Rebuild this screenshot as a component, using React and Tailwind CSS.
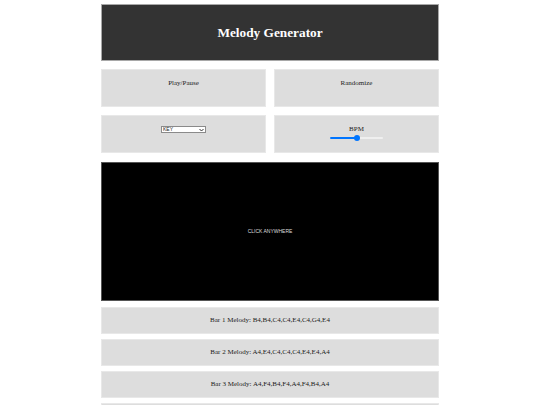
import React, { useState } from 'react';

const bars = [
    'B4,B4,C4,C4,E4,C4,G4,E4',
    'A4,E4,C4,C4,C4,E4,E4,A4',
    'A4,F4,B4,F4,A4,F4,B4,A4',
    'C4,E4,G4,E4,C4,G4,E4,C4',
];

const App = () => {
    const [bpm] = useState(50);

    return (
        <div className="min-h-screen bg-white font-['Liberation_Serif',serif] text-[#222222]">
            <div className="w-[338px] mx-auto pt-[4px]">
                <div className="h-[57px] bg-[#333333] border border-[#a8a8a8] flex items-center justify-center">
                    <h1 className="text-white font-bold text-[13.3px] leading-none">Melody Generator</h1>
                </div>

                <div className="grid grid-cols-2 gap-[8px] mt-[8px]">
                    <button className="h-[38px] bg-[#dddddd] border border-[#e8e8e8] text-[7px] leading-[8px] pt-[9px] flex justify-center items-start">
                        Play/Pause
                    </button>
                    <button className="h-[38px] bg-[#dddddd] border border-[#e8e8e8] text-[7px] leading-[8px] pt-[9px] flex justify-center items-start">
                        Randomize
                    </button>
                </div>

                <div className="grid grid-cols-2 gap-[8px] mt-[8px]">
                    <div className="h-[38px] bg-[#dddddd] border border-[#e8e8e8] flex justify-center pt-[10px]">
                        <div className="w-[45px] h-[7px] bg-white border border-[#8a8a8a] flex items-center justify-between px-[1px] font-['Liberation_Sans',sans-serif] text-[5px] leading-none">
                            <span>KEY</span>
                            <svg width="5" height="4" viewBox="0 0 10 8">
                                <path d="M1 2 L5 6 L9 2" fill="none" stroke="#333" strokeWidth="2" />
                            </svg>
                        </div>
                    </div>
                    <div className="h-[38px] bg-[#dddddd] border border-[#e8e8e8] flex flex-col items-center pt-[10px]">
                        <span className="text-[7px] leading-[7px]">BPM</span>
                        <div className="relative w-[53px] h-[6px] mt-[2px] flex items-center">
                            <div className="w-full h-[2px] rounded-full bg-[#efefef]" />
                            <div className="absolute left-0 h-[2px] rounded-full bg-[#0075ff]" style={{ width: `${bpm}%` }} />
                            <div className="absolute w-[6px] h-[6px] rounded-full bg-[#0075ff]" style={{ left: `calc(${bpm}% - 3px)` }} />
                        </div>
                    </div>
                </div>

                <div className="h-[139px] mt-[9px] bg-black border border-[#555555] flex items-center justify-center">
                    <span className="text-[#dddddd] text-[5px] font-['Liberation_Sans',sans-serif]">CLICK ANYWHERE</span>
                </div>

                <div className="flex flex-col gap-[5px] mt-[6px]">
                    {bars.map((notes, i) => (
                        <div key={i} className="h-[27px] bg-[#dddddd] border border-[#e8e8e8] flex items-center justify-center text-[7px]">
                            Bar {i + 1} Melody: {notes}
                        </div>
                    ))}
                </div>
            </div>
        </div>
    );
};

export default App;
